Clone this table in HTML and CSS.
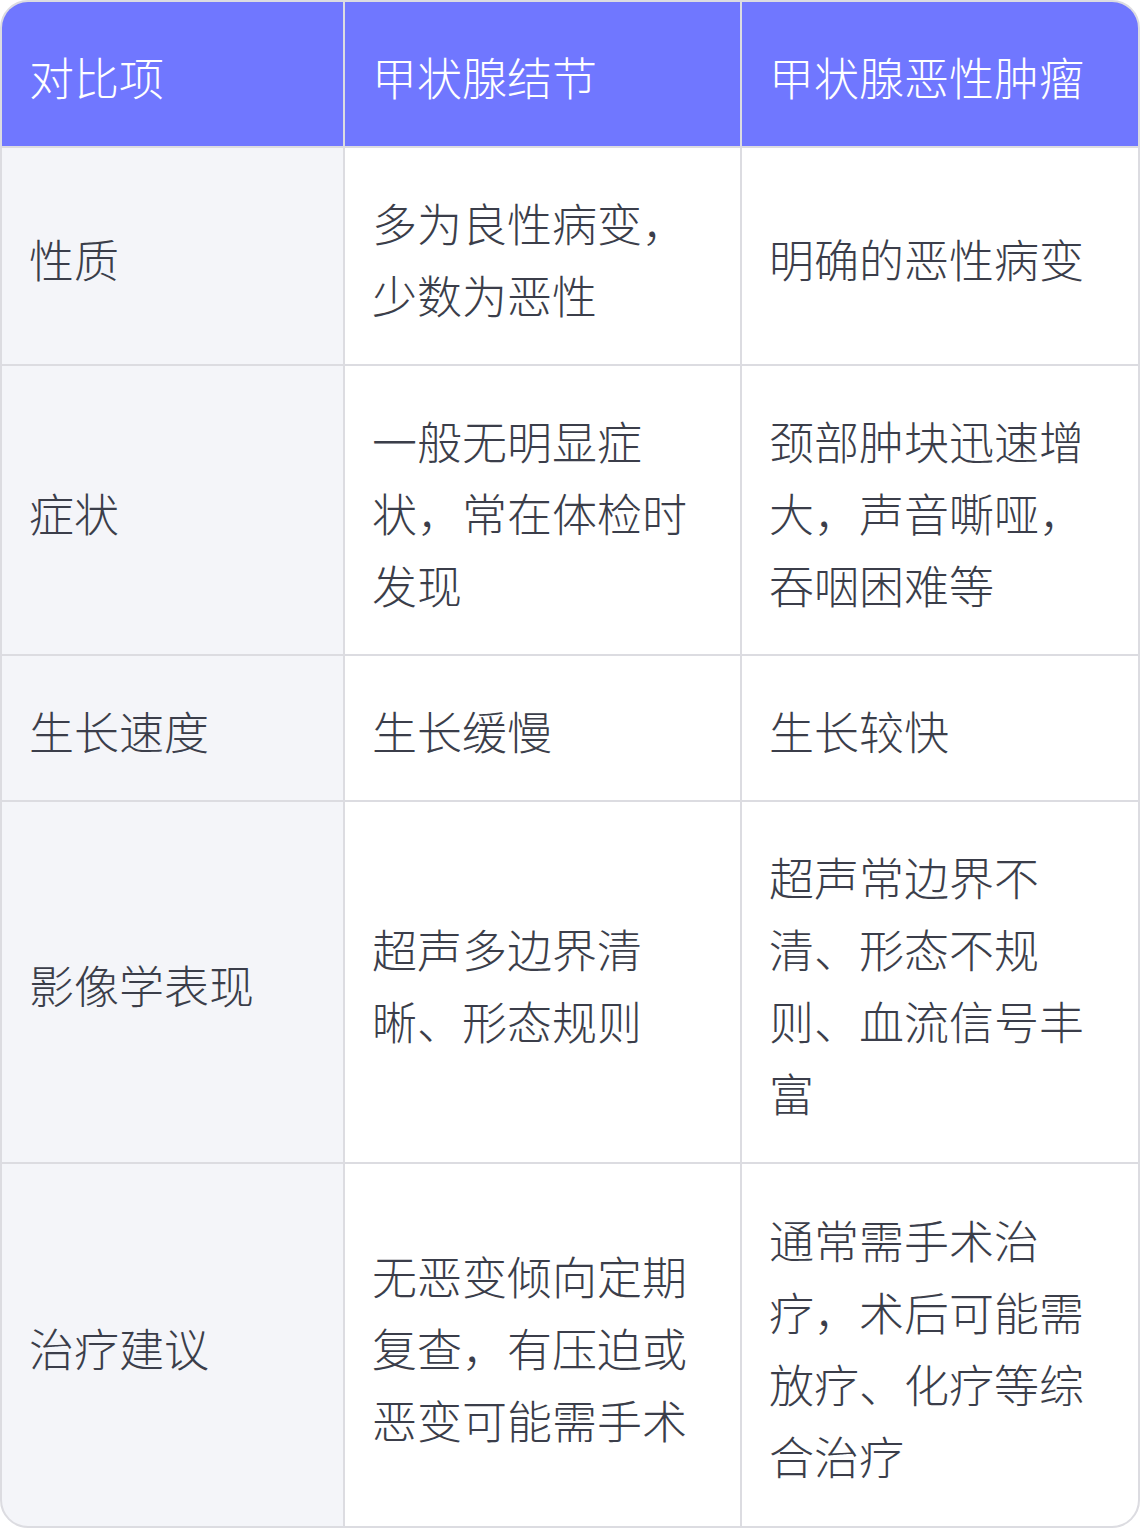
FILE: index.html
```html
<!DOCTYPE html>
<html lang="zh-CN">
<head>
<meta charset="utf-8">
<link rel="stylesheet" href="styles.css">
</head>
<body>
<div class="table">
  <div class="cell head">对比项</div>
  <div class="cell head">甲状腺结节</div>
  <div class="cell head">甲状腺恶性肿瘤</div>

  <div class="cell label">性质</div>
  <div class="cell">多为良性病变，少数为恶性</div>
  <div class="cell">明确的恶性病变</div>

  <div class="cell label">症状</div>
  <div class="cell">一般无明显症状，常在体检时发现</div>
  <div class="cell">颈部肿块迅速增大，声音嘶哑，吞咽困难等</div>

  <div class="cell label">生长速度</div>
  <div class="cell">生长缓慢</div>
  <div class="cell">生长较快</div>

  <div class="cell label">影像学表现</div>
  <div class="cell">超声多边界清晰、形态规则</div>
  <div class="cell">超声常边界不清、形态不规则、血流信号丰富</div>

  <div class="cell label">治疗建议</div>
  <div class="cell">无恶变倾向定期复查，有压迫或恶变可能需手术</div>
  <div class="cell">通常需手术治疗，术后可能需放疗、化疗等综合治疗</div>
</div>
</body>
</html>
```

FILE: styles.css
```css
html, body {
  margin: 0;
  padding: 0;
  background: #ffffff;
}
body {
  font-family: "Noto Sans CJK SC", "Noto Sans", sans-serif;
}
.table {
  width: 1140px;
  min-height: 1528px;
  box-sizing: border-box;
  border: 2px solid #dcdce1;
  border-radius: 28px;
  overflow: hidden;
  background: #dcdce1;
  display: grid;
  grid-template-columns: 341px 395px 396px;
  grid-template-rows: auto auto auto auto auto 1fr;
  gap: 2px;
}
.cell {
  background: #ffffff;
  color: #3b3e4a;
  font-size: 45px;
  font-weight: 300;
  line-height: 72px;
  padding: 39px 28px 33px 27px;
  display: flex;
  align-items: center;
  line-break: strict;
}
.cell.head {
  background: #7077ff;
  color: #ffffff;
}
.cell.label {
  background: #f4f5f9;
}
```
